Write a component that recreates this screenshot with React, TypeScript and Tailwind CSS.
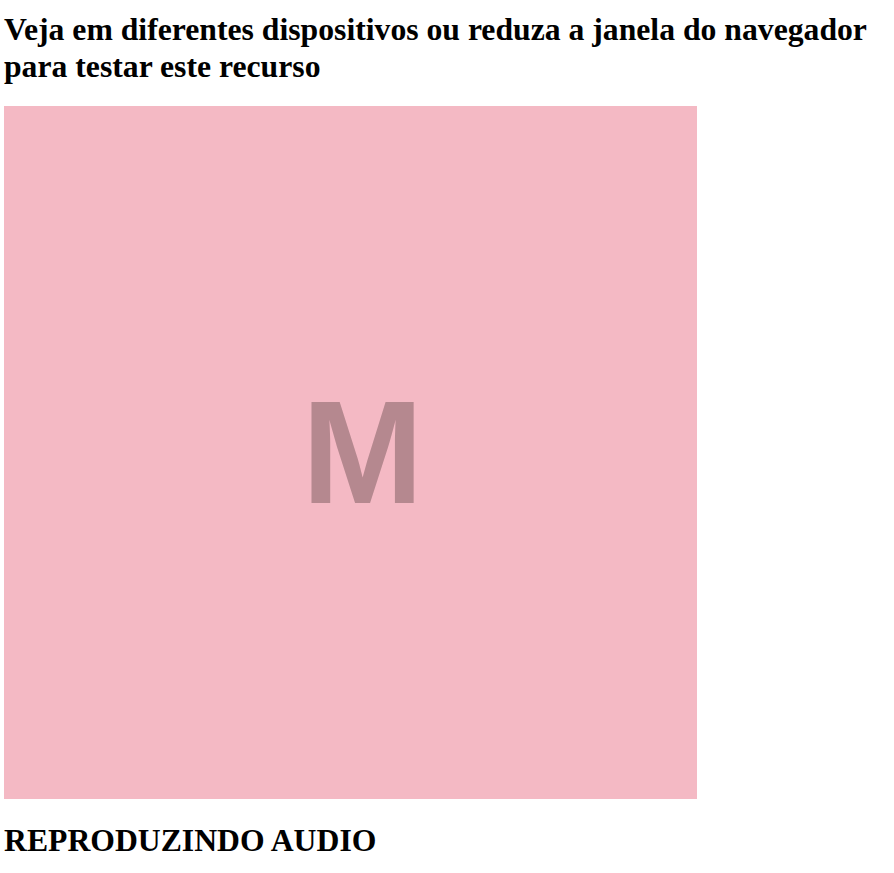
export default function App() {
  return (
    <div className="min-h-screen bg-white pl-1 font-['Liberation_Serif',serif] text-black">
      {/* Title */}
      <h1 className="mt-[11px] mb-[21px] text-[31.7px] font-bold leading-[37px]">
        Veja em diferentes dispositivos ou reduza a janela do navegador para testar este recurso
      </h1>

      {/* Placeholder square */}
      <div className="flex h-[693px] w-[693px] items-center justify-center bg-[#f4b9c4] pl-6">
        <span className="font-['Liberation_Sans',sans-serif] text-[146px] font-bold leading-normal text-[#b5888f]">
          M
        </span>
      </div>

      {/* Status */}
      <h2 className="mt-[24px] text-[31.7px] font-bold leading-[36px]">REPRODUZINDO AUDIO</h2>
    </div>
  );
}
